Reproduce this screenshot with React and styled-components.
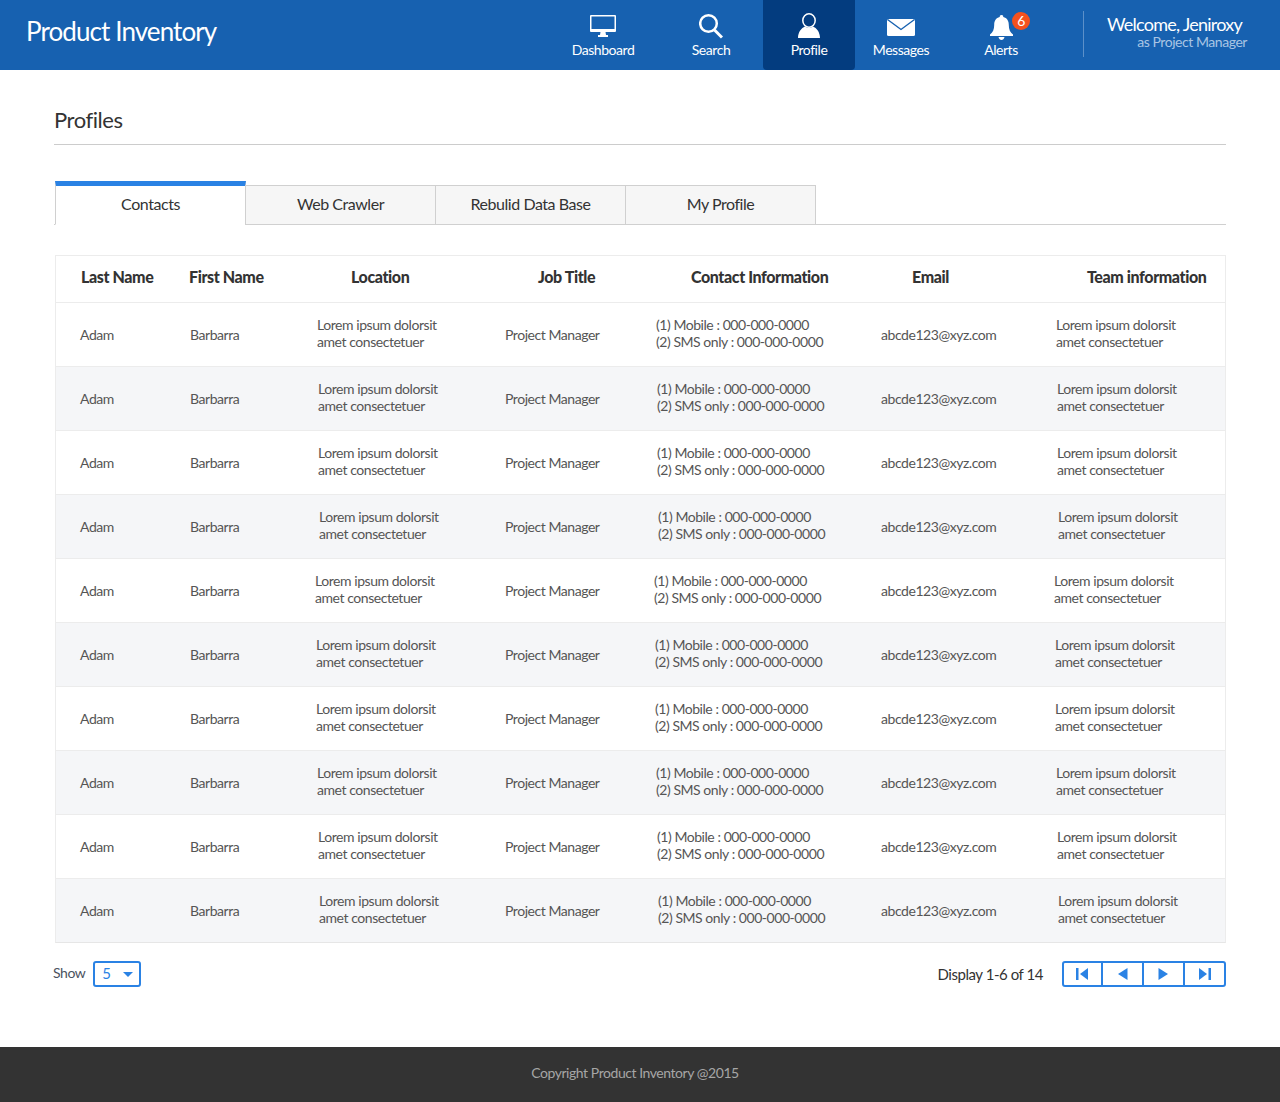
import React from 'react';
import styled, { createGlobalStyle } from 'styled-components';

const GlobalStyle = createGlobalStyle`
  html, body {
    margin: 0;
    padding: 0;
    background: #fff;
    font-family: "Lato", "Noto Sans", sans-serif;
    font-size: 14px;
    letter-spacing: -0.032em;
    color: #333;
  }
  * { box-sizing: border-box; }
`;

const Header = styled.header`
  height: 70px;
  background: #1761b0;
  display: flex;
  align-items: stretch;
  padding: 0 33px 0 26px;
  color: #fff;
`;

const Brand = styled.h1`
  margin: 0 auto 0 0;
  font-size: 26px;
  font-weight: 400;
  line-height: 62px;
  letter-spacing: -0.035em;
`;

const Nav = styled.nav`
  display: flex;
  align-items: stretch;
`;

const NavItem = styled.a`
  width: 92px;
  margin-left: ${p => p.$gap || 0}px;
  display: flex;
  flex-direction: column;
  align-items: center;
  background: ${p => (p.$active ? '#033c7f' : 'transparent')};
  border-radius: 0 0 4px 4px;
  font-size: 14px;
  position: relative;
`;

const IconSlot = styled.span`
  height: 42px;
  display: flex;
  align-items: flex-end;
  justify-content: center;
  padding-bottom: 2px;
`;

const NavLabel = styled.span`
  line-height: 16px;
`;

const Badge = styled.span`
  position: absolute;
  top: 12px;
  left: 57px;
  width: 18px;
  height: 18px;
  border-radius: 50%;
  background: #f4511e;
  font-size: 14px;
  line-height: 18px;
  text-align: center;
`;

const Welcome = styled.div`
  margin: 11px 0 13px 36px;
  padding: 3px 0 0 23px;
  border-left: 1px solid #5c90c9;
  width: 164px;
  text-align: right;
  white-space: nowrap;
`;

const WelcomeName = styled.div`
  font-size: 18px;
  line-height: 20px;
  text-align: left;
  letter-spacing: -0.042em;
`;

const WelcomeRole = styled.div`
  font-size: 14px;
  line-height: 15px;
  color: #a9c5e4;
`;

const Main = styled.main`
  padding: 0 54px;
  height: 977px;
`;

const PageTitle = styled.h2`
  margin: 0;
  padding-top: 37px;
  height: 75px;
  border-bottom: 1px solid #ccc;
  font-size: 22px;
  font-weight: 400;
  line-height: 26px;
  color: #333;
`;

const Tabs = styled.div`
  margin-top: 36px;
  height: 44px;
  display: flex;
  align-items: flex-end;
  border-bottom: 1px solid #d0d0d0;
  padding-left: 1px;
`;

const Tab = styled.div`
  width: 191px;
  height: ${p => (p.$active ? 44 : 40)}px;
  margin-bottom: -1px;
  margin-left: ${p => (p.$active ? 0 : -1)}px;
  padding-bottom: 3px;
  display: flex;
  align-items: center;
  justify-content: center;
  font-size: 16px;
  color: #333;
  background: ${p => (p.$active ? '#fff' : '#f6f6f6')};
  border: 1px solid #d0d0d0;
  border-top: ${p => (p.$active ? '5px solid #2a82e4' : '1px solid #d0d0d0')};
  border-bottom-color: ${p => (p.$active ? '#fff' : '#d0d0d0')};
`;

const Table = styled.div`
  margin: 30px 0 0 1px;
  border: 1px solid #ececec;
  border-bottom-color: #e6e6e6;
  width: 1171px;
`;

const HeadRow = styled.div`
  display: grid;
  grid-template-columns: 134px 125px 190px 149px 227px 173px 1fr;
  height: 46px;
  align-items: center;
  padding-bottom: 6px;
  background: #fff;
`;

const HeadCell = styled.div`
  margin-left: ${p => p.$indent}px;
  font-size: 16px;
  font-weight: 900;
  letter-spacing: -0.025em;
  color: #333;
  white-space: nowrap;
`;

const Row = styled.div`
  display: grid;
  grid-template-columns: 134px 125px 190px 149px 227px 173px 1fr;
  height: 64px;
  align-items: center;
  border-top: 1px solid #ececec;
  background: ${p => (p.$striped ? '#f5f6f8' : '#fff')};
`;

const Cell = styled.div`
  padding-left: ${p => p.$indent || 0}px;
  margin-bottom: ${p => (p.$multi ? 4 : 0)}px;
  font-size: 14px;
  line-height: 17px;
  color: #555;
  white-space: pre-line;
`;

const Footer = styled.div`
  display: flex;
  align-items: center;
  justify-content: space-between;
  margin-top: 18px;
`;

const ShowBox = styled.div`
  display: flex;
  align-items: center;
  gap: 8px;
  margin-left: -1px;
  color: #4a5260;
`;

const ShowLabel = styled.span`
  padding-bottom: 3px;
`;

const Select = styled.div`
  width: 48px;
  height: 26px;
  border: 2px solid #2a82e4;
  border-radius: 3px;
  color: #2a82e4;
  display: flex;
  align-items: center;
  justify-content: space-between;
  padding: 0 6px 2px 7px;
  font-size: 15px;
`;

const Caret = styled.span`
  width: 0;
  height: 0;
  margin-top: 2px;
  border-left: 5px solid transparent;
  border-right: 5px solid transparent;
  border-top: 5px solid #2a82e4;
`;

const PagerBox = styled.div`
  display: flex;
  align-items: center;
  gap: 19px;
  font-size: 15px;
  color: #333;
`;

const DisplayLabel = styled.span`
  padding-bottom: 1px;
`;

const Pager = styled.div`
  display: flex;
  height: 26px;
  width: 164px;
  border: 2px solid #2a82e4;
  border-radius: 3px;
`;

const PageBtn = styled.span`
  flex: 1;
  display: flex;
  align-items: center;
  justify-content: center;
  & + & { border-left: 2px solid #2a82e4; }
  &:first-child { flex: 0 0 37px; }
`;

const Copyright = styled.footer`
  height: 55px;
  background: #333;
  color: #a6a6a6;
  font-size: 14px;
  text-align: center;
  line-height: 52px;
  padding-right: 10px;
`;

const MonitorIcon = () => (
  <svg width="26" height="27" viewBox="0 0 26 27" fill="#fff">
    <path fillRule="evenodd" d="M1 2h24a1 1 0 0 1 1 1v15a1 1 0 0 1-1 1H15.500l.5 3h2v2H8v-2h2l.5-3H1a1 1 0 0 1-1-1V3a1 1 0 0 1 1-1zM1.500 3.500V16h23V3.500z" />
  </svg>
);

const SearchIcon = () => (
  <svg width="24" height="27" viewBox="0 0 24 27" fill="none" stroke="#fff">
    <circle cx="9.500" cy="10.500" r="8.300" strokeWidth="2.500" />
    <path d="M15.500 17l7.500 7.500" strokeWidth="3" />
  </svg>
);

const UserIcon = () => (
  <svg width="22" height="27" viewBox="0 0 22 27" fill="#fff">
    <ellipse cx="11" cy="7.500" rx="6.200" ry="6.700" fill="none" stroke="#fff" strokeWidth="1.500" />
    <path d="M0 25c0-6 3.500-10 7-11.500 1.500 1.800 6.500 1.800 8 0C18.500 15 22 19 22 25z" />
  </svg>
);

const MailIcon = () => (
  <svg width="28" height="27" viewBox="0 0 28 27">
    <rect x="0" y="6" width="28" height="17" rx="1.500" fill="#fff" />
    <path d="M0.500 6.500L14 16.500 27.500 6.500" fill="none" stroke="#1761b0" strokeWidth="1.400" />
  </svg>
);

const BellIcon = () => (
  <svg width="23" height="27" viewBox="0 0 23 27" fill="#fff">
    <path d="M11.500 2a1.800 1.800 0 0 1 1.800 2.100C17 5 18.800 8 18.800 12c0 4.500 1.400 7.500 4.200 9.500V23H0v-1.500c2.800-2 4.200-5 4.200-9.500 0-4 1.800-7 5.500-7.900A1.800 1.800 0 0 1 11.500 2zM8.500 24h6c-.4 1.800-1.600 3-3 3s-2.600-1.200-3-3z" />
  </svg>
);

const PagerIcon = ({ dir, bar }) => (
  <svg width="13" height="12" viewBox="0 0 13 12" fill="#2a82e4">
    {dir === 'left' ? <path d={bar ? 'M12 0v12L4 6z' : 'M11.500 0v12L2 6z'} /> : <path d={bar ? 'M1 0v12l8-6z' : 'M1.500 0v12L11 6z'} />}
    {bar && <rect x={dir === 'left' ? 0 : 10.500} y="0" width="2.500" height="12" />}
  </svg>
);

const navItems = [
  { label: 'Dashboard', icon: <MonitorIcon /> },
  { label: 'Search', icon: <SearchIcon />, gap: 16 },
  { label: 'Profile', icon: <UserIcon />, gap: 6, active: true },
  { label: 'Messages', icon: <MailIcon /> },
  { label: 'Alerts', icon: <BellIcon />, gap: 8, badge: 6 },
];

const tabs = ['Contacts', 'Web Crawler', 'Rebulid Data Base', 'My Profile'];

const headers = [
  ['Last Name', 25],
  ['First Name', -1],
  ['Location', 36],
  ['Job Title', 33],
  ['Contact Information', 37],
  ['Email', 31],
  ['Team information', 33],
];

// the reference's multi-line cells drift a pixel or two from row to row
const drift = [2, 3, 3, 4, 0, 1, 1, 2, 3, 4];

const App = () => (
  <>
    <GlobalStyle />
    <Header>
      <Brand>Product Inventory</Brand>
      <Nav>
        {navItems.map(item => (
          <NavItem key={item.label} $gap={item.gap} $active={item.active}>
            <IconSlot>{item.icon}</IconSlot>
            <NavLabel>{item.label}</NavLabel>
            {item.badge && <Badge>{item.badge}</Badge>}
          </NavItem>
        ))}
      </Nav>
      <Welcome>
        <WelcomeName>Welcome, Jeniroxy</WelcomeName>
        <WelcomeRole>as Project Manager</WelcomeRole>
      </Welcome>
    </Header>
    <Main>
      <PageTitle>Profiles</PageTitle>
      <Tabs>
        {tabs.map((tab, i) => (
          <Tab key={tab} $active={i === 0}>{tab}</Tab>
        ))}
      </Tabs>
      <Table>
        <HeadRow>
          {headers.map(([label, indent]) => (
            <HeadCell key={label} $indent={indent}>{label}</HeadCell>
          ))}
        </HeadRow>
        {drift.map((d, i) => (
          <Row key={i} $striped={i % 2 === 1}>
            <Cell $indent={24}>Adam</Cell>
            <Cell>Barbarra</Cell>
            <Cell $multi $indent={d}>{'Lorem ipsum dolorsit\namet consectetuer'}</Cell>
            <Cell>Project Manager</Cell>
            <Cell $multi $indent={d}>{'(1) Mobile : 000-000-0000\n(2) SMS only : 000-000-0000'}</Cell>
            <Cell>abcde123@xyz.com</Cell>
            <Cell $multi $indent={d}>{'Lorem ipsum dolorsit\namet consectetuer'}</Cell>
          </Row>
        ))}
      </Table>
      <Footer>
        <ShowBox>
          <ShowLabel>Show</ShowLabel>
          <Select>5<Caret /></Select>
        </ShowBox>
        <PagerBox>
          <DisplayLabel>Display 1-6 of 14</DisplayLabel>
          <Pager>
            <PageBtn><PagerIcon dir="left" bar /></PageBtn>
            <PageBtn><PagerIcon dir="left" /></PageBtn>
            <PageBtn><PagerIcon dir="right" /></PageBtn>
            <PageBtn><PagerIcon dir="right" bar /></PageBtn>
          </Pager>
        </PagerBox>
      </Footer>
    </Main>
    <Copyright>Copyright Product Inventory @2015</Copyright>
  </>
);

export default App;
